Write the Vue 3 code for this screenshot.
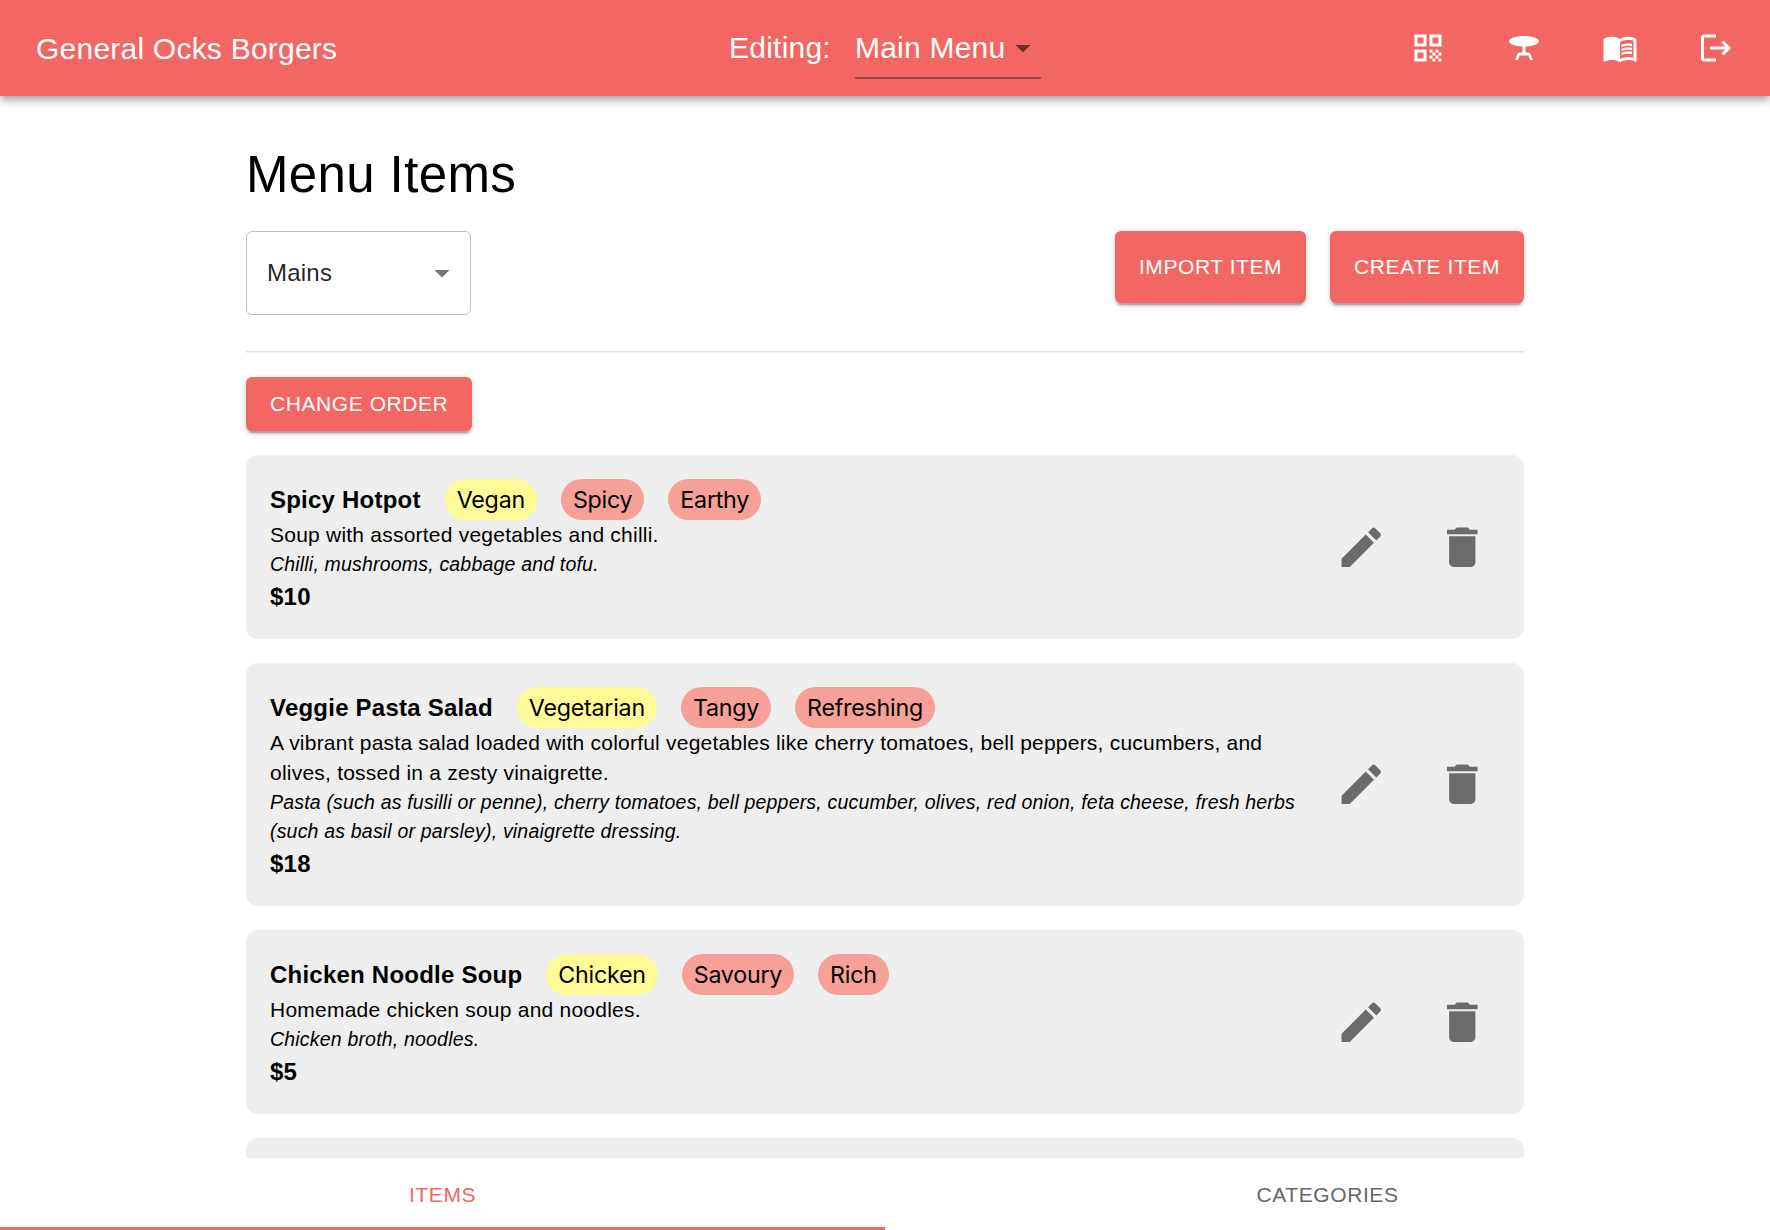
<script setup>
import { ref } from 'vue'

const navIcons = [
  {
    name: 'QR codes',
    path: 'M3 11h8V3H3v8zm2-6h4v4H5V5zM3 21h8v-8H3v8zm2-6h4v4H5v-4zM13 3v8h8V3h-8zm6 6h-4V5h4v4zM19 19h2v2h-2zM13 13h2v2h-2zM15 15h2v2h-2zM13 17h2v2h-2zM15 19h2v2h-2zM17 17h2v2h-2zM17 13h2v2h-2zM19 15h2v2h-2z',
  },
  {
    name: 'Tables',
    path: 'M22 7.5C22 5.57 17.52 4 12 4S2 5.57 2 7.5c0 1.81 3.95 3.31 9 3.48V15H9.35c-.82 0-1.55.5-1.86 1.26L6 20h2l1.2-3h5.6l1.2 3h2l-1.5-3.74c-.3-.76-1.04-1.26-1.85-1.26H13v-4.02c5.05-.17 9-1.67 9-3.48z',
  },
  {
    name: 'Menus',
    path: 'M21 5c-1.11-.35-2.33-.5-3.5-.5-1.95 0-4.05.4-5.5 1.5-1.45-1.1-3.55-1.5-5.5-1.5S2.45 4.9 1 6v14.65c0 .25.25.5.5.5.1 0 .15-.05.25-.05C3.1 20.45 5.05 20 6.5 20c1.95 0 4.05.4 5.5 1.5 1.35-.85 3.8-1.5 5.5-1.5 1.65 0 3.35.3 4.75 1.05.1.05.15.05.25.05.25 0 .5-.25.5-.5V6c-.6-.45-1.25-.75-2-1zm0 13.5c-1.1-.35-2.3-.5-3.5-.5-1.7 0-4.15.65-5.5 1.5V8c1.35-.85 3.8-1.5 5.5-1.5 1.2 0 2.4.15 3.5.5v11.5zM17.5 10.5c.88 0 1.73.09 2.5.26V9.24c-.79-.15-1.64-.24-2.5-.24-1.7 0-3.24.29-4.5.83v1.66c1.13-.64 2.7-.99 4.5-.99zM13 12.49v1.66c1.13-.64 2.7-.99 4.5-.99.88 0 1.73.09 2.5.26V11.9c-.79-.15-1.64-.24-2.5-.24-1.7 0-3.24.3-4.5.83zM17.5 14.33c-1.7 0-3.24.29-4.5.83v1.66c1.13-.64 2.7-.99 4.5-.99.88 0 1.73.09 2.5.26v-1.52c-.79-.16-1.64-.24-2.5-.24z',
  },
  {
    name: 'Log out',
    path: 'm17 7-1.41 1.41L18.17 11H8v2h10.17l-2.58 2.58L17 17l5-5zM4 5h8V3H4c-1.1 0-2 .9-2 2v14c0 1.1.9 2 2 2h8v-2H4V5z',
  },
]

const items = [
  {
    name: 'Spicy Hotpot',
    diet: ['Vegan'],
    flavours: ['Spicy', 'Earthy'],
    description: 'Soup with assorted vegetables and chilli.',
    ingredients: 'Chilli, mushrooms, cabbage and tofu.',
    price: '$10',
  },
  {
    name: 'Veggie Pasta Salad',
    diet: ['Vegetarian'],
    flavours: ['Tangy', 'Refreshing'],
    description:
      'A vibrant pasta salad loaded with colorful vegetables like cherry tomatoes, bell peppers, cucumbers, and olives, tossed in a zesty vinaigrette.',
    ingredients:
      'Pasta (such as fusilli or penne), cherry tomatoes, bell peppers, cucumber, olives, red onion, feta cheese, fresh herbs (such as basil or parsley), vinaigrette dressing.',
    price: '$18',
  },
  {
    name: 'Chicken Noodle Soup',
    diet: ['Chicken'],
    flavours: ['Savoury', 'Rich'],
    description: 'Homemade chicken soup and noodles.',
    ingredients: 'Chicken broth, noodles.',
    price: '$5',
  },
]

const tabs = ['Items', 'Categories']
const activeTab = ref('Items')
</script>

<template>
  <div class="page">
    <header class="app-bar">
      <div class="brand">General Ocks Borgers</div>
      <div class="editing">
        <span>Editing:</span>
        <div class="menu-select">
          <span>Main Menu</span>
          <svg class="caret" viewBox="0 0 24 24"><path d="M7 10l5 5 5-5z" /></svg>
        </div>
      </div>
      <nav class="nav">
        <button v-for="icon in navIcons" :key="icon.name" class="nav-button" :aria-label="icon.name">
          <svg viewBox="0 0 24 24"><path :d="icon.path" /></svg>
        </button>
      </nav>
    </header>

    <main class="content">
      <h1 class="title">Menu Items</h1>
      <div class="toolbar">
        <div class="category-select">
          <span>Mains</span>
          <svg class="caret" viewBox="0 0 24 24"><path d="M7 10l5 5 5-5z" /></svg>
        </div>
        <div class="actions">
          <button class="button tall">Import Item</button>
          <button class="button tall">Create Item</button>
        </div>
      </div>
      <hr class="divider" />
      <button class="button order">Change Order</button>

      <section class="list">
        <article v-for="item in items" :key="item.name" class="card">
          <div class="details">
            <div class="heading">
              <h2 class="name">{{ item.name }}</h2>
              <span v-for="tag in item.diet" :key="tag" class="tag diet">{{ tag }}</span>
              <span v-for="tag in item.flavours" :key="tag" class="tag">{{ tag }}</span>
            </div>
            <p class="description">{{ item.description }}</p>
            <p class="ingredients">{{ item.ingredients }}</p>
            <p class="price">{{ item.price }}</p>
          </div>
          <div class="card-actions">
            <button class="icon-button" aria-label="Edit">
              <svg viewBox="0 0 24 24">
                <path d="M3 17.25V21h3.75L17.81 9.94l-3.75-3.75L3 17.25zM20.71 7.04c.39-.39.39-1.02 0-1.41l-2.34-2.34a.9959.9959 0 0 0-1.41 0l-1.83 1.83 3.75 3.75 1.83-1.83z" />
              </svg>
            </button>
            <button class="icon-button" aria-label="Delete">
              <svg viewBox="0 0 24 24">
                <path d="M6 19c0 1.1.9 2 2 2h8c1.1 0 2-.9 2-2V7H6v12zM19 4h-3.5l-1-1h-5l-1 1H5v2h14V4z" />
              </svg>
            </button>
          </div>
        </article>
        <article class="card next"></article>
      </section>
    </main>

    <footer class="tabs">
      <button
        v-for="tab in tabs"
        :key="tab"
        class="tab"
        :class="{ active: tab === activeTab }"
        @click="activeTab = tab"
      >
        {{ tab }}
      </button>
    </footer>
  </div>
</template>

<style>
body {
  margin: 0;
  overflow: hidden;
}
</style>

<style scoped>
.page {
  display: flex;
  flex-direction: column;
  height: 1230px;
  background: #fff;
  color: #000;
  font-family: "Liberation Sans", Helvetica, Arial, sans-serif;
}
button {
  border: 0;
  margin: 0;
  background: none;
  font-family: inherit;
  cursor: pointer;
}
svg {
  display: block;
  fill: currentColor;
}

.app-bar {
  display: flex;
  justify-content: space-between;
  align-items: center;
  flex: none;
  height: 96px;
  box-sizing: border-box;
  padding: 0 24px 0 36px;
  background: #f26764;
  color: #fff;
  font-size: 30px;
  letter-spacing: 0.225px;
  box-shadow: 0 3px 6px -1.5px rgba(0, 0, 0, 0.2), 0 6px 7.5px rgba(0, 0, 0, 0.14), 0 1.5px 15px rgba(0, 0, 0, 0.12);
  position: relative;
}
.brand {
  width: 336px;
  padding-top: 1px;
}
.editing {
  display: flex;
  align-items: center;
  gap: 24px;
  height: 60px;
}
.menu-select {
  display: flex;
  align-items: center;
  justify-content: space-between;
  box-sizing: border-box;
  width: 186px;
  height: 61px;
  padding-top: 2px;
  border-bottom: 2px solid rgba(0, 0, 0, 0.34);
  white-space: nowrap;
}
.caret {
  flex: none;
  width: 36px;
  height: 36px;
  color: rgba(0, 0, 0, 0.54);
}
.nav {
  display: flex;
  justify-content: flex-end;
  gap: 36px;
}
.nav-button {
  padding: 12px;
  color: #fff;
}
.nav-button svg {
  width: 36px;
  height: 36px;
}

.content {
  flex: 1;
  min-height: 0;
  overflow: hidden;
  width: 1278px;
  margin: 0 auto;
  padding: 47px 6px 0;
}
.title {
  margin: 0 0 25px;
  font-size: 51px;
  font-weight: 400;
  line-height: 63px;
  letter-spacing: 0.375px;
}
.toolbar {
  display: flex;
  justify-content: space-between;
  align-items: flex-start;
}
.category-select {
  display: flex;
  align-items: center;
  justify-content: space-between;
  box-sizing: border-box;
  width: 225px;
  height: 84px;
  padding: 0 10px 0 20px;
  border: 1.5px solid #c0c0c0;
  border-radius: 6px;
  color: rgba(0, 0, 0, 0.87);
  font-size: 24px;
  letter-spacing: 0.225px;
}
.actions {
  display: flex;
  gap: 24px;
}
.button {
  padding: 9px 24px;
  border-radius: 6px;
  background: #f26764;
  color: #fff;
  font-size: 21px;
  line-height: 36.75px;
  letter-spacing: 0.57px;
  text-transform: uppercase;
  box-shadow: 0 4.5px 1.5px -3px rgba(0, 0, 0, 0.2), 0 3px 3px rgba(0, 0, 0, 0.14), 0 1.5px 7.5px rgba(0, 0, 0, 0.12);
}
.tall {
  height: 72px;
}
.divider {
  height: 0;
  margin: 36px 0 24.5px;
  border: 0;
  border-top: 1.5px solid #dfdfdf;
  box-shadow: 0 1px 0 #efefef;
}
.order {
  display: block;
}

.list {
  display: flex;
  flex-direction: column;
  gap: 24px;
  margin-top: 24px;
}
.card {
  display: flex;
  justify-content: space-between;
  align-items: center;
  padding: 24px;
  border-radius: 12px;
  background: #eee;
}
.next {
  height: 136px;
}
.details {
  width: 1036px;
}
.heading {
  display: flex;
  align-items: center;
  gap: 24px;
}
.name {
  margin: 0;
  padding-top: 1px;
  font-size: 24px;
  font-weight: 700;
  line-height: 36px;
  letter-spacing: 0.225px;
}
.tag {
  padding: 1px 12px 0;
  border-radius: 21px;
  background: #f7a097;
  font-family: Inter, sans-serif;
  font-size: 23.25px;
  line-height: 39.5px;
  letter-spacing: -0.25px;
}
.diet {
  background: #fffb97;
}
.description,
.ingredients,
.price {
  margin: 0;
}
.description {
  font-size: 21px;
  line-height: 30px;
  letter-spacing: 0.225px;
}
.ingredients {
  font-size: 19.5px;
  font-style: italic;
  line-height: 29.25px;
  letter-spacing: 0.19px;
}
.price {
  font-size: 24px;
  font-weight: 700;
  line-height: 36px;
  letter-spacing: 0.225px;
}
.card-actions {
  display: flex;
  gap: 24px;
}
.icon-button {
  padding: 12px;
  color: #6b6b6b;
}
.icon-button svg {
  width: 52.5px;
  height: 52.5px;
}

.tabs {
  display: flex;
  flex: none;
  height: 72px;
}
.tab {
  flex: 1;
  padding: 4px 0 0;
  border-bottom: 3px solid transparent;
  color: #666;
  font-size: 21px;
  letter-spacing: 0.6px;
  text-transform: uppercase;
}
.active {
  border-color: #f26764;
  color: #f26764;
}
</style>
